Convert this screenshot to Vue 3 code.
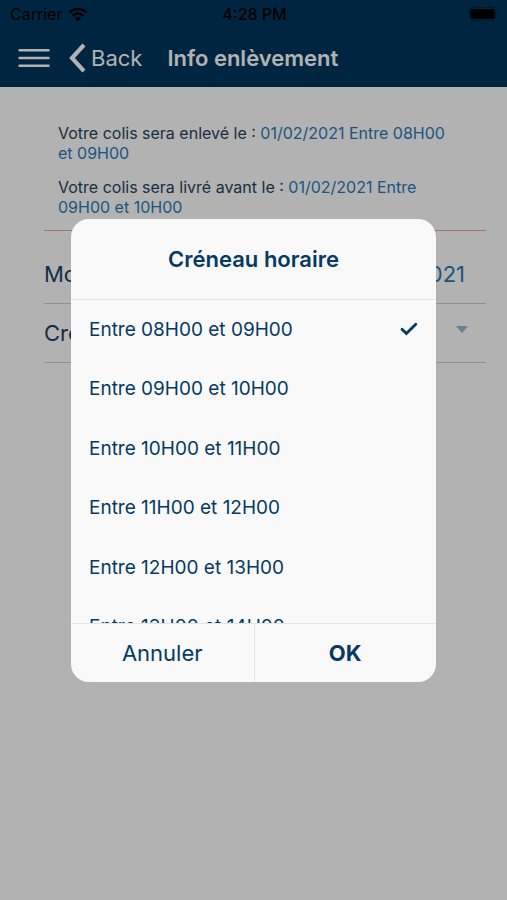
<script setup>
import { ref } from 'vue'

const slots = [
  'Entre 08H00 et 09H00',
  'Entre 09H00 et 10H00',
  'Entre 10H00 et 11H00',
  'Entre 11H00 et 12H00',
  'Entre 12H00 et 13H00',
  'Entre 13H00 et 14H00',
]
const selected = ref(slots[0])
</script>

<template>
  <div class="screen">
    <header class="header">
      <div class="status">
        <span class="carrier">
          Carrier
          <svg class="wifi" viewBox="0 0 20 15" aria-hidden="true">
            <path d="M1.5 5.5a12 12 0 0 1 17 0M4.6 8.8a7.6 7.6 0 0 1 10.8 0" />
            <path class="dot" d="M10 14.5L6.8 11.2a4.5 4.5 0 0 1 6.4 0z" />
          </svg>
        </span>
        <span class="clock">4:28 PM</span>
        <svg class="battery" viewBox="0 0 30 14" aria-hidden="true">
          <rect class="shell" x="0.5" y="0.5" width="26" height="13" rx="3" />
          <rect x="1.5" y="2" width="24" height="10" rx="1.5" />
          <path class="cap" d="M28 5v4q1.5-.5 1.5-2T28 5z" />
        </svg>
      </div>
      <nav class="toolbar">
        <button class="menu" type="button" aria-label="Menu">
          <svg viewBox="0 0 32 20" aria-hidden="true">
            <path d="M1.5 2.2h29M1.5 10h29M1.5 17.8h29" />
          </svg>
        </button>
        <button class="back" type="button">
          <svg viewBox="0 0 18 30" aria-hidden="true">
            <path d="M14.5 3.5L4 15L14.5 26.5" />
          </svg>
          Back
        </button>
        <h1>Info enlèvement</h1>
      </nav>
    </header>

    <main class="content">
      <section class="summary">
        <p>Votre colis sera enlevé le : <b>01/02/2021 Entre 08H00 et 09H00</b></p>
        <p>Votre colis sera livré avant le : <b>01/02/2021 Entre 09H00 et 10H00</b></p>
      </section>
      <div class="field">
        <span>Modifier</span>
        <span class="value">01/02/2021</span>
      </div>
      <div class="field">
        <span>Créneau</span>
        <svg class="caret" viewBox="0 0 12 7" aria-hidden="true"><path d="M0 0h12L6 7z" /></svg>
      </div>
    </main>

    <div class="backdrop">
      <form class="dialog" role="dialog" aria-labelledby="dialog-title" @submit.prevent>
        <h2 id="dialog-title">Créneau horaire</h2>
        <div class="list">
          <div class="options">
            <label v-for="slot in slots" :key="slot" class="option">
              <input v-model="selected" type="radio" name="slot" :value="slot" />
              <span>{{ slot }}</span>
              <svg v-if="selected === slot" class="check" viewBox="0 0 18 14" aria-hidden="true">
                <path d="M2 7.2L6.4 11.6L15.8 2.2" />
              </svg>
            </label>
          </div>
        </div>
        <div class="actions">
          <button type="button">Annuler</button>
          <button type="submit" class="ok">OK</button>
        </div>
      </form>
    </div>
  </div>
</template>

<style>
body {
  background: #fff;
}
</style>

<style scoped>
.screen {
  position: relative;
  min-height: 100vh;
  font-family: Inter, 'Liberation Sans', sans-serif;
  color: #1c4463;
}
button {
  border: 0;
  padding: 0;
  background: none;
  color: inherit;
  font: inherit;
}
svg {
  display: block;
  flex: none;
}
h1,
h2,
p {
  margin: 0;
}
.header {
  background: #00365c;
  color: #fff;
}
.status {
  display: grid;
  grid-template-columns: 1fr auto 1fr;
  align-items: center;
  height: 28px;
  padding: 0 8px 0 10px;
  color: #000;
  font-size: 16px;
}
.carrier {
  display: flex;
  align-items: center;
  gap: 6px;
}
.wifi {
  width: 20px;
  height: 15px;
  fill: none;
  stroke: #000;
  stroke-width: 2.6;
}
.wifi .dot {
  fill: #000;
  stroke: none;
}
.clock {
  font-weight: 500;
}
.battery {
  width: 30px;
  height: 14px;
  justify-self: end;
}
.battery .shell {
  fill: none;
  stroke: #000;
  opacity: 0.3;
}
.battery .cap {
  opacity: 0.3;
}
.toolbar {
  display: flex;
  align-items: center;
  height: 59px;
  padding: 0 18px;
}
.menu svg {
  width: 32px;
  height: 20px;
  fill: none;
  stroke: #fff;
  stroke-width: 2.4;
  stroke-linecap: round;
}
.back {
  display: flex;
  align-items: center;
  gap: 5px;
  margin-left: 18px;
  font-size: 22px;
}
.back svg {
  width: 18px;
  height: 30px;
  fill: none;
  stroke: #fff;
  stroke-width: 4.2;
  stroke-linecap: square;
}
h1 {
  margin-left: 25px;
  font-size: 22px;
  font-weight: 600;
}
.content {
  padding: 36px 21px 0 44px;
}
.summary {
  display: grid;
  gap: 14px;
  padding: 0 36px 13px 14px;
  border-bottom: 1px solid #e3a9ae;
  color: #24445c;
  font-size: 16px;
  line-height: 20px;
}
.summary b {
  color: #2a7ab8;
  font-weight: 400;
}
.field {
  display: flex;
  align-items: center;
  justify-content: space-between;
  height: 58px;
  padding-right: 21px;
  border-bottom: 1px solid #cfcfcf;
  font-size: 22px;
}
.summary + .field {
  margin-top: 14px;
}
.field .value {
  color: #2a7ab8;
}
.caret {
  width: 12px;
  height: 7px;
  margin: 0 -3px 8px 0;
  fill: #9db8cc;
}
.backdrop {
  position: absolute;
  inset: 0;
  display: flex;
  align-items: center;
  justify-content: center;
  background: rgba(0, 0, 0, 0.3);
}
.dialog {
  width: 72%;
  max-width: 420px;
  overflow: hidden;
  border-radius: 18px;
  background: #f9f9f9;
  color: #073a62;
}
h2 {
  padding: 26px 16px;
  border-bottom: 1px solid #e2e4e5;
  font-size: 22px;
  font-weight: 600;
  line-height: 28px;
  text-align: center;
}
.list {
  height: 323px;
  overflow: hidden;
}
.options {
  display: grid;
  grid-auto-rows: 1fr;
  height: 357px;
}
.option {
  display: flex;
  align-items: center;
  justify-content: space-between;
  padding: 0 18px;
  font-size: 19px;
}
.option input {
  position: absolute;
  opacity: 0;
  pointer-events: none;
}
.check {
  width: 18px;
  height: 14px;
  fill: none;
  stroke: #073a62;
  stroke-width: 2.8;
  stroke-linecap: round;
}
.actions {
  display: grid;
  grid-template-columns: 1fr 1fr;
  border-top: 1px solid #e2e4e5;
}
.actions button {
  height: 58px;
  font-size: 22px;
}
.actions .ok {
  border-left: 1px solid #e2e4e5;
  font-weight: 700;
}
</style>
